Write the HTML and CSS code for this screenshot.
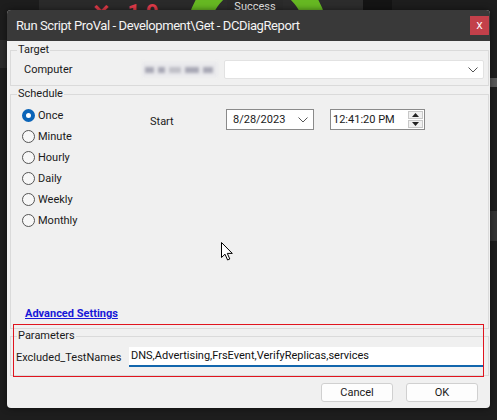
FILE: index.html
```html
<!DOCTYPE html>
<html>
<head>
<meta charset="utf-8">
<link rel="stylesheet" href="styles.css">
</head>
<body>
<div class="desktop">
  <div class="bg-panel-left"></div>
  <div class="bg-panel-mid"></div>
  <div class="bg-dark-strip"></div>
  <div class="bg-red">✕ 19</div>
  <div class="bg-ring"></div>
  <div class="bg-success">Success</div>
  <div class="bg-side-left"></div>
  <div class="bg-side-right1"></div>
  <div class="bg-side-right2"></div>
</div>

<div class="dialog">
  <div class="titlebar">
    <span class="title">Run Script ProVal - Development\Get - DCDiagReport</span>
    <span class="close">x</span>
  </div>
  <div class="content">
    <div class="group group-target">
      <span class="legend">Target</span>
      <div class="row-computer">
        <span class="lbl lbl-computer">Computer</span>
        <span class="blurred"><i class="b1"></i><i class="b2"></i><i class="b3"></i><i class="b4"></i><i class="b5"></i></span>
        <div class="combo">
          <svg class="chev" width="10" height="6" viewBox="0 0 10 6"><path d="M0.5 0.5 L5 5 L9.5 0.5" fill="none" stroke="#555" stroke-width="1"/></svg>
        </div>
      </div>
    </div>

    <div class="group group-schedule">
      <span class="legend">Schedule</span>
      <div class="sched-body">
        <div class="radios">
          <div class="radio-row"><span class="radio checked"></span><span class="lbl">Once</span></div>
          <div class="radio-row"><span class="radio"></span><span class="lbl">Minute</span></div>
          <div class="radio-row"><span class="radio"></span><span class="lbl">Hourly</span></div>
          <div class="radio-row"><span class="radio"></span><span class="lbl">Daily</span></div>
          <div class="radio-row"><span class="radio"></span><span class="lbl">Weekly</span></div>
          <div class="radio-row"><span class="radio"></span><span class="lbl">Monthly</span></div>
        </div>
        <div class="start-row">
          <span class="lbl lbl-start">Start</span>
          <div class="datebox">
            <span class="val">8/28/2023</span>
            <svg class="chev" width="10" height="6" viewBox="0 0 10 6"><path d="M0.5 0.5 L5 5 L9.5 0.5" fill="none" stroke="#555" stroke-width="1"/></svg>
          </div>
          <div class="timebox">
            <span class="val">12:41:20 PM</span>
            <div class="spin">
              <span class="spin-btn"><svg width="7" height="4" viewBox="0 0 7 4"><path d="M0 4 L3.5 0 L7 4 Z" fill="#222"/></svg></span>
              <span class="spin-btn"><svg width="7" height="4" viewBox="0 0 7 4"><path d="M0 0 L3.5 4 L7 0 Z" fill="#222"/></svg></span>
            </div>
          </div>
        </div>
      </div>
      <a class="adv" href="#">Advanced Settings</a>
    </div>

    <div class="group group-params">
      <span class="legend">Parameters</span>
      <div class="param-row">
        <span class="lbl lbl-param">Excluded_TestNames</span>
        <div class="param-input">DNS,Advertising,FrsEvent,VerifyReplicas,services</div>
      </div>
    </div>

    <div class="buttons">
      <button class="btn">Cancel</button>
      <button class="btn">OK</button>
    </div>
  </div>
  <div class="highlight"></div>
</div>

<svg class="cursor" width="13" height="19" viewBox="0 0 13 19">
  <path d="M0.5 0.5 L0.5 15.5 L4 12.2 L6.6 18 L8.8 17 L6.3 11.4 L11.3 11.4 Z" fill="#fff" stroke="#000" stroke-width="1" stroke-linejoin="round"/>
</svg>
</body>
</html>
```

FILE: styles.css
```css
html, body {
  margin: 0;
  padding: 0;
}
body {
  width: 497px;
  height: 420px;
  overflow: hidden;
  background: #1d1d1d;
  position: relative;
  font-family: Roboto, "Liberation Sans", sans-serif;
  font-size: 11px;
  color: #1a1a1a;
}

/* ---------- background application behind the dialog ---------- */
.desktop {
  position: absolute;
  inset: 0;
}
.bg-panel-left {
  position: absolute;
  left: 39px; top: 0;
  width: 168px; height: 60px;
  background: #2a2a2a;
}
.bg-panel-mid {
  position: absolute;
  left: 207px; top: 0;
  width: 156px; height: 60px;
  background: #2c2c2c;
}
.bg-dark-strip {
  position: absolute;
  left: 363px; top: 0;
  width: 29px; height: 60px;
  background: #141414;
}
.bg-red {
  position: absolute;
  left: 92px; top: 2px;
  height: 8px;
  overflow: hidden;
  color: #e23b4a;
  font-size: 22px;
  line-height: 22px;
  font-weight: bold;
  letter-spacing: 6px;
}
.bg-ring {
  position: absolute;
  left: 187px; top: -36px;
  width: 96px; height: 96px;
  border-radius: 50%;
  border: 22px solid #66b822;
}
.bg-success {
  position: absolute;
  left: 227px; top: 0;
  width: 56px;
  height: 10px;
  overflow: hidden;
  background: #2a2a2a;
  color: #e8e8e8;
  font-size: 11px;
  text-align: center;
  line-height: 14px;
}
.bg-side-left {
  position: absolute;
  left: 0; top: 40px;
  width: 8px; height: 28px;
  background: #2b2b2b;
}
.bg-side-right1 {
  position: absolute;
  left: 490px; top: 78px;
  width: 7px; height: 9px;
  background: #585858;
}
.bg-side-right2 {
  position: absolute;
  left: 490px; top: 211px;
  width: 7px; height: 30px;
  background: #333;
}

/* ---------- dialog window ---------- */
.dialog {
  position: absolute;
  left: 7px; top: 10px;
  width: 483px; height: 398px;
  background: #f0f0f0;
  border-radius: 4px;
  overflow: hidden;
  display: flex;
  flex-direction: column;
  box-shadow: 0 0 6px rgba(0,0,0,0.5);
}
.titlebar {
  height: 31px;
  flex: none;
  background: #393939;
  color: #f4f4f4;
  display: flex;
  align-items: center;
  justify-content: space-between;
  padding-left: 9px;
  padding-right: 1px;
}
.title {
  font-size: 13px;
  letter-spacing: -0.4px;
}
.close {
  width: 19px;
  height: 19px;
  background: #c3404a;
  color: #fff;
  font-size: 12px;
  line-height: 18px;
  text-align: center;
  font-family: "Liberation Sans", sans-serif;
}
.content {
  flex: 1;
  display: flex;
  flex-direction: column;
  padding: 0 0 0 3px;
  position: relative;
}

/* group boxes */
.group {
  position: relative;
  border: 1px solid #dadada;
  width: 479px;
  box-sizing: border-box;
}
.legend {
  position: absolute;
  left: 6px;
  top: -8px;
  background: #f0f0f0;
  padding: 0 1px;
  font-size: 11px;
  line-height: 14px;
}
.lbl {
  font-size: 11px;
}

.group-target {
  margin-top: 9px;
  height: 36px;
}
.row-computer {
  display: flex;
  align-items: center;
  height: 19px;
  margin-top: 9px;
  padding-left: 13px;
}
.lbl-computer {
  width: 118px;
}
.blurred {
  display: flex;
  align-items: center;
  width: 76px;
  height: 15px;
  background: #e9e9ec;
  gap: 4px;
  padding-left: 3px;
  box-sizing: border-box;
  filter: blur(1.5px);
}
.blurred i {
  display: block;
  height: 6px;
  background: #a8a8b5;
}
.b1 { width: 9px; }
.b2 { width: 7px; }
.b3 { width: 12px; background: #c0c0c8 !important; }
.b4 { width: 14px; }
.b5 { width: 10px; }
.combo {
  margin-left: 6px;
  width: 260px;
  height: 19px;
  background: #fff;
  border: 1px solid #e2e2e2;
  border-radius: 2px;
  box-sizing: border-box;
  display: flex;
  align-items: center;
  justify-content: flex-end;
  padding-right: 5px;
}

.group-schedule {
  margin-top: 8px;
  height: 235px;
  display: flex;
  flex-direction: column;
}
.sched-body {
  display: flex;
  padding-top: 14px;
}
.radios {
  display: flex;
  flex-direction: column;
  gap: 8px;
  padding-left: 11px;
  width: 128px;
}
.radio-row {
  display: flex;
  align-items: center;
  height: 13px;
  gap: 3px;
}
.radio {
  width: 13px;
  height: 13px;
  border-radius: 50%;
  border: 1px solid #555;
  box-sizing: border-box;
  background: #f7f7f7;
  flex: none;
}
.radio.checked {
  border: 4px solid #0a64b8;
  background: #fff;
}
.start-row {
  display: flex;
  align-items: center;
  height: 21px;
}
.lbl-start {
  width: 76px;
  padding-top: 4px;
}
.datebox, .timebox {
  height: 21px;
  background: #fff;
  border: 1px solid #8a8a8a;
  box-sizing: border-box;
  display: flex;
  align-items: center;
  font-size: 11px;
}
.datebox {
  width: 88px;
  padding: 0 5px 0 6px;
  justify-content: space-between;
}
.timebox {
  width: 95px;
  margin-left: 16px;
  padding: 0 1px 0 2px;
  justify-content: space-between;
}
.spin {
  display: flex;
  flex-direction: column;
  gap: 1px;
}
.spin-btn {
  width: 15px;
  height: 8px;
  background: #f0f0f0;
  border: 1px solid #c8c8c8;
  box-sizing: border-box;
  display: flex;
  align-items: center;
  justify-content: center;
}
.adv {
  margin-top: auto;
  margin-bottom: 8px;
  margin-left: 14px;
  align-self: flex-start;
  color: #1818d8;
  font-weight: bold;
  font-size: 11px;
  text-decoration: underline;
}

.group-params {
  margin-top: 7px;
  height: 40px;
}
.param-row {
  display: flex;
  align-items: center;
  margin-top: 10px;
  padding-left: 5px;
}
.lbl-param {
  width: 113px;
}
.param-input {
  width: 354px;
  height: 20px;
  background: #fff;
  border-bottom: 2px solid #1266ad;
  box-sizing: border-box;
  padding: 2px 0 0 2px;
  font-size: 11px;
  color: #111;
}

.buttons {
  display: flex;
  justify-content: flex-end;
  gap: 13px;
  padding-right: 12px;
  margin-top: 7px;
}
.btn {
  width: 72px;
  height: 19px;
  background: #fdfdfd;
  border: 1px solid #d0d0d0;
  border-radius: 3px;
  font-family: Roboto, "Liberation Sans", sans-serif;
  font-size: 11px;
  color: #1a1a1a;
  padding: 0;
}

/* red annotation rectangle */
.highlight {
  position: absolute;
  left: 6px;
  top: 314px;
  width: 469px;
  height: 51px;
  border: 1px solid #e0141e;
}

.cursor {
  position: absolute;
  left: 221px;
  top: 242px;
}
```
